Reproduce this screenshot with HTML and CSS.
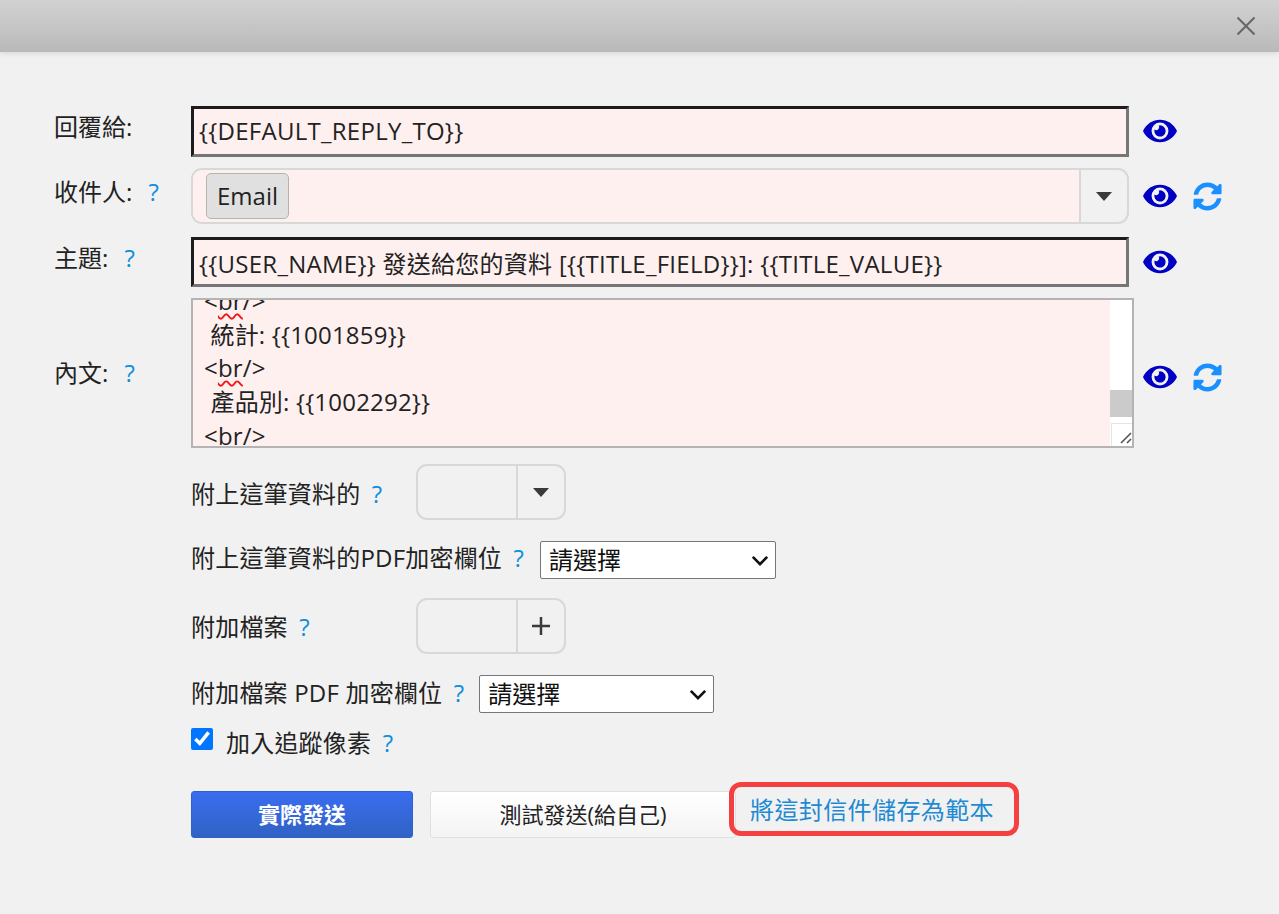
FILE: index.html
```html
<!DOCTYPE html>
<html lang="zh-Hant">
<head>
<meta charset="utf-8">
<title>Email</title>
<link rel="stylesheet" href="styles.css">
</head>
<body>
<svg class="defs" width="0" height="0" aria-hidden="true">
  <symbol id="eye" viewBox="0 0 576 512"><path d="M572.52 241.4C518.29 135.59 410.93 64 288 64S57.68 135.64 3.48 241.41a32.35 32.35 0 0 0 0 29.19C57.71 376.41 165.07 448 288 448s230.32-71.64 284.52-177.41a32.35 32.35 0 0 0 0-29.19zM288 400a144 144 0 1 1 144-144 143.93 143.93 0 0 1-144 144zm0-240a95.31 95.31 0 0 0-25.31 3.79 47.85 47.85 0 0 1-66.9 66.9A95.78 95.78 0 1 0 288 160z"/></symbol>
  <symbol id="sync" viewBox="0 0 512 512"><path d="M370.72 133.28C339.458 104.008 298.888 87.962 255.848 88c-77.458.068-144.328 53.178-162.791 126.85-1.344 5.363-6.122 9.15-11.651 9.15H24.103c-7.498 0-13.194-6.807-11.807-14.176C33.933 94.924 134.813 8 256 8c66.448 0 126.791 26.136 171.315 68.685L463.03 40.97C478.149 25.851 504 36.559 504 57.941V192c0 13.255-10.745 24-24 24H345.941c-21.382 0-32.09-25.851-16.971-40.971l41.75-41.749zM32 296h134.059c21.382 0 32.09 25.851 16.971 40.971l-41.75 41.75c31.262 29.273 71.835 45.319 114.876 45.28 77.418-.07 144.315-53.144 162.787-126.849 1.344-5.363 6.122-9.15 11.651-9.15h57.304c7.498 0 13.194 6.807 11.807 14.176C478.067 417.076 377.187 504 256 504c-66.448 0-126.791-26.136-171.315-68.685L48.97 471.03C33.851 486.149 8 475.441 8 454.059V320c0-13.255 10.745-24 24-24z"/></symbol>
</svg>

<header class="top-bar">
  <svg class="close" viewBox="0 0 20 20" width="20" height="20"><path d="M1.5 1.5L18.5 18.5M18.5 1.5L1.5 18.5"/></svg>
</header>

<main class="form">
  <div class="row row-reply">
    <div class="label">回覆給:</div>
    <div class="field field-inset field-tall">{{DEFAULT_REPLY_TO}}</div>
    <svg class="icon-eye icon-eye-up"><use href="#eye"/></svg>
  </div>

  <div class="row row-to">
    <div class="label">收件人: <span class="help">?</span></div>
    <div class="combo combo-wide">
      <div class="combo-body combo-pink"><span class="tag">Email</span></div>
      <div class="combo-btn"><span class="caret"></span></div>
    </div>
    <svg class="icon-eye"><use href="#eye"/></svg>
    <svg class="icon-sync"><use href="#sync"/></svg>
  </div>

  <div class="row row-subject">
    <div class="label">主題: <span class="help">?</span></div>
    <div class="field field-inset field-short">{{USER_NAME}} 發送給您的資料 [{{TITLE_FIELD}}]: {{TITLE_VALUE}}</div>
    <svg class="icon-eye"><use href="#eye"/></svg>
  </div>

  <div class="row row-body">
    <div class="label">內文: <span class="help">?</span></div>
    <div class="textarea">
      <div class="textarea-text">
        <div class="line">&lt;<span class="squiggle">br</span>/&gt;</div>
        <div class="line">&nbsp;統計: {{1001859}}</div>
        <div class="line">&lt;<span class="squiggle">br</span>/&gt;</div>
        <div class="line">&nbsp;產品別: {{1002292}}</div>
        <div class="line">&lt;br/&gt;</div>
      </div>
      <div class="scrollbar">
        <div class="thumb"></div>
        <div class="resizer"><svg viewBox="0 0 22 22" width="22" height="22"><path d="M9 19L19 9M15 19L19 15"/></svg></div>
      </div>
    </div>
    <svg class="icon-eye icon-eye-body"><use href="#eye"/></svg>
    <svg class="icon-sync icon-sync-body"><use href="#sync"/></svg>
  </div>

  <div class="sub">
    <div class="sub-row sub-attach">
      <span class="sub-label sub-label-fixed">附上這筆資料的 <span class="help">?</span></span>
      <div class="combo combo-small">
        <div class="combo-body"></div>
        <div class="combo-btn"><span class="caret"></span></div>
      </div>
    </div>

    <div class="sub-row sub-pdf">
      <span class="sub-label">附上這筆資料的PDF加密欄位 <span class="help">?</span></span>
      <select class="select select-a"><option>請選擇</option></select>
    </div>

    <div class="sub-row sub-file">
      <span class="sub-label sub-label-fixed">附加檔案 <span class="help">?</span></span>
      <div class="combo combo-small">
        <div class="combo-body"></div>
        <div class="combo-btn"><svg class="plus" viewBox="0 0 20 20" width="20" height="20"><path d="M10 1V19M1 10H19"/></svg></div>
      </div>
    </div>

    <div class="sub-row sub-filepdf">
      <span class="sub-label">附加檔案 PDF 加密欄位 <span class="help">?</span></span>
      <select class="select select-b"><option>請選擇</option></select>
    </div>

    <label class="sub-row sub-track">
      <input class="check" type="checkbox" checked>
      <span class="sub-label">加入追蹤像素 <span class="help">?</span></span>
    </label>

    <div class="actions">
      <button class="btn btn-primary" type="button">實際發送</button>
      <button class="btn btn-test" type="button">測試發送(給自己)</button>
      <a class="save-link" href="#">將這封信件儲存為範本</a>
    </div>
  </div>
</main>
</body>
</html>
```

FILE: styles.css
```css
* { box-sizing: border-box; }

html, body {
  margin: 0;
  height: 100%;
}

body {
  background: #f1f1f1;
  color: #222;
  font-family: "Open Sans", "Noto Sans CJK TC", sans-serif;
  font-size: 24px;
  overflow: hidden;
}

.defs { display: block; height: 0; }

.top-bar {
  height: 52px;
  background: linear-gradient(#d2d2d2, #b9b9b9);
  box-shadow: 0 1px 6px rgba(0, 0, 0, .12);
  display: flex;
  justify-content: flex-end;
  align-items: center;
  padding-right: 23px;
}

.close { fill: none; stroke: #666; stroke-width: 2; }

.form { padding: 54px 0 0 54px; }

.row { display: flex; align-items: center; }
.row-to { margin-top: 11px; }
.row-subject { margin-top: 13px; }
.row-body { margin-top: 11px; }

.label {
  width: 137px;
  flex: none;
  line-height: 30px;
  margin-top: -9px;
  white-space: nowrap;
}

.row-body .label { margin-top: 0; }

.label .help { margin-left: 10px; }

.help {
  color: #0f8fdc;
  margin-left: 5px;
}

.field {
  width: 938px;
  flex: none;
  background: #fff0f0;
  padding: 0 5px;
  white-space: nowrap;
  color: #222;
  letter-spacing: .27px;
}

.field-inset {
  border-style: solid;
  border-width: 3px;
  border-color: #1c1c1c #767676 #767676 #1c1c1c;
  display: flex;
  align-items: center;
}

.field-tall { height: 51px; padding-bottom: 2px; }
.field-short { height: 50px; }

.icon-eye {
  width: 34px;
  height: 30px;
  margin-left: 14px;
  fill: #0000c4;
  flex: none;
}

.icon-eye-up { margin-top: -2px; }
.icon-eye-body { margin: 8px 0 0 9px; }

.icon-sync {
  width: 29px;
  height: 29px;
  margin-left: 16px;
  fill: #1a8fff;
  flex: none;
}

.icon-sync-body { margin-top: 8px; }

.combo {
  display: flex;
  border: 2px solid #d8d8d8;
  border-radius: 11px;
  overflow: hidden;
  flex: none;
}

.combo-wide { width: 938px; height: 56px; }
.combo-small { width: 150px; height: 56px; }

.combo-body {
  flex: 1;
  display: flex;
  align-items: center;
  padding-left: 13px;
}

.combo-pink { background: #fff0f0; }

.combo-btn {
  width: 48px;
  flex: none;
  border-left: 2px solid #d8d8d8;
  display: flex;
  align-items: center;
  justify-content: center;
}

.tag {
  height: 46px;
  padding: 0 10px 2px;
  display: flex;
  align-items: center;
  background: #e0e0e0;
  border: 1px solid #b4b4b4;
  border-radius: 5px;
  color: #222;
}

.caret {
  width: 0;
  height: 0;
  border-left: 8px solid transparent;
  border-right: 8px solid transparent;
  border-top: 9px solid #3a3a3a;
}

.plus { fill: none; stroke: #3a3a3a; stroke-width: 2.5; }

.textarea {
  width: 943px;
  height: 150px;
  flex: none;
  display: flex;
  border: 2px solid #b4b4b4;
  background: #fff;
  overflow: hidden;
}

.textarea-text {
  flex: 1;
  background: #fff0f0;
  padding-left: 11px;
  overflow: hidden;
}

.line {
  height: 33.7px;
  line-height: 33.7px;
  white-space: nowrap;
  color: #222;
  letter-spacing: .2px;
}

.line:first-child { margin-top: -16px; }

.squiggle { text-decoration: underline wavy #f01818 1.5px; text-underline-offset: 3px; }

.scrollbar {
  width: 22px;
  flex: none;
  display: flex;
  flex-direction: column;
  background: #fff;
}

.thumb {
  height: 28px;
  margin-top: 90px;
  background: #cbcbcb;
}

.resizer {
  margin-top: 6px;
  height: 24px;
  border-left: 1px solid #e4e4e4;
  border-top: 1px solid #e4e4e4;
  margin-left: 1px;
}

.resizer svg { display: block; fill: none; stroke: #555; stroke-width: 1.6; }

.sub { padding-left: 137px; }

.sub-row { display: flex; align-items: center; }
.sub-attach { margin-top: 16px; }
.sub-pdf { margin-top: 21px; }
.sub-file { margin-top: 19px; }
.sub-filepdf { margin-top: 21px; }
.sub-track { margin-top: 15px; height: 22px; }

.sub-label {
  white-space: nowrap;
  line-height: 30px;
  letter-spacing: .2px;
}

.sub-attach .sub-label { margin-top: 4px; }
.sub-pdf .sub-label { margin-bottom: 4px; }
.sub-file .sub-label { margin-top: 2px; }
.sub-filepdf .sub-label { margin-bottom: 2px; }
.sub-track .sub-label { margin-top: 8px; }

.sub-label-fixed { width: 225px; flex: none; }

.select {
  height: 38px;
  appearance: none;
  background: #fff url("data:image/svg+xml,%3Csvg xmlns='http://www.w3.org/2000/svg' viewBox='0 0 20 12'%3E%3Cpath d='M2 2l8 8 8-8' fill='none' stroke='%23111' stroke-width='3'/%3E%3C/svg%3E") no-repeat right 6px center / 18px 11px;
  border: 1px solid #767676;
  border-radius: 2px;
  color: #111;
  font: inherit;
  line-height: 30px;
  padding: 0 0 0 8px;
}

.select-a { width: 236px; margin-left: 16px; }
.select-b { width: 235px; margin-left: 15px; }

.check {
  width: 22px;
  height: 22px;
  margin: 0 13px 0 0;
  accent-color: #0075ff;
  flex: none;
}

.actions {
  display: flex;
  align-items: center;
  margin-top: 41px;
}

.btn {
  font: inherit;
  font-size: 22px;
  height: 47px;
  padding-bottom: 5px;
  border-radius: 3px;
  cursor: pointer;
}

.btn-primary {
  width: 222px;
  color: #fff;
  font-weight: 700;
  border: 1px solid #2f62c8;
  background: linear-gradient(#3a6df0, #3062c4);
}

.btn-test {
  width: 306px;
  margin-left: 17px;
  color: #222;
  background: linear-gradient(#ffffff, #f4f4f4);
  border: 1px solid #e0e0e0;
}

.save-link {
  position: relative;
  margin-left: -7px;
  margin-top: -11px;
  width: 290px;
  height: 54px;
  display: flex;
  align-items: center;
  justify-content: center;
  border: 5px solid #f44040;
  border-radius: 12px;
  color: #1f8ad2;
  text-decoration: none;
  white-space: nowrap;
  letter-spacing: .4px;
  padding: 0 4px 2px 0;
}
```
